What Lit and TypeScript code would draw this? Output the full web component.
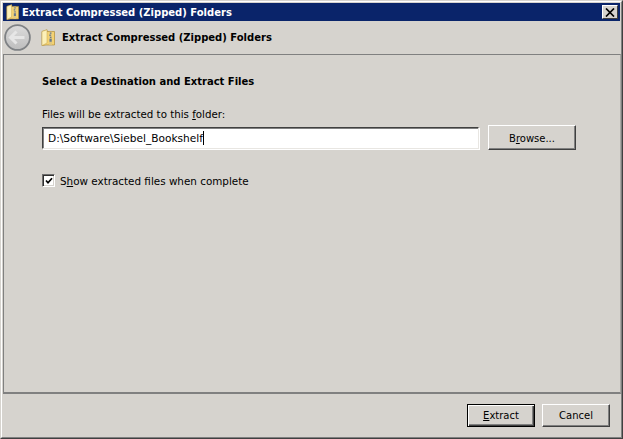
import { LitElement, html, css } from "lit";
import { customElement } from "lit/decorators.js";

const folder = (w: number, h: number) => html`<svg viewBox="0 0 14 17" width=${w} height=${h}>
  <path d="M1 2.5 L6 .8 L6 2.5 L13.5 2.5 L13.5 16 L5 16 L1 16.6 Z" fill="#f4d272" stroke="#b08e3a" stroke-width=".7"/>
  <path d="M1 2.5 L6 .8 L6 14 L1 16.6 Z" fill="#fcf0b8" stroke="#c4a450" stroke-width=".5"/>
  <path d="M8 2.8 h3 v13 h-3z" fill="#e0c880"/>
  <path d="M9 3.5h1.4v1.3h-1.4zM8.4 5.6h1.4v1.3h-1.4zM9 7.7h1.4v1.3h-1.4zM8.5 9.8h2.2v3h-2.2z" fill="#68788a"/>
</svg>`;

@customElement("app-root")
export class AppRoot extends LitElement {
  static styles = css`
    :host { display: block; width: 623px; height: 439px; overflow: hidden; font-family: "DejaVu Sans", sans-serif; font-size: 10px; color: #000; }
    * { box-sizing: border-box; }
    .win { width: 623px; height: 439px; display: flex; flex-direction: column; background: #d6d3ce;
      border-top: 1px solid #d6d3ce; border-left: 1px solid #d6d3ce; border-right: 1px solid #404040; border-bottom: 1px solid #404040; }
    .inner { flex: 1; display: flex; flex-direction: column; border-top: 1px solid #fff; border-left: 1px solid #fff; border-right: 1px solid #808080; border-bottom: 1px solid #808080; padding: 1px 1px 2px 1px; min-height: 0; }
    .title { height: 18px; flex: none; background: #0a246a; display: flex; align-items: center; padding: 0 2px 0 0; color: #fff; font-weight: 700; font-size: 10px; }
    .title .ic { width: 19px; display: flex; justify-content: center; }
    .title .txt { flex: 1; white-space: nowrap; }
    .close { width: 16px; height: 14px; background: #d6d3ce; border: 1px solid; border-color: #fff #404040 #404040 #fff; display: flex; align-items: center; justify-content: center; }
    .head { height: 33px; flex: none; display: flex; align-items: center; }
    .back { width: 27px; height: 27px; margin-left: 1px; }
    .head .ic { margin-left: 10px; width: 14px; height: 17px; display: flex; }
    .head .h { margin-left: 7px; font-weight: 700; font-size: 10px; white-space: nowrap; }
    .panel { height: 340px; flex: none; margin-right: -1px; border: 1px solid #808080; border-bottom-width: 2px; border-right-color: #a8a8a4; padding: 20px 0 0 38px; }
    .panel h1 { margin: 0; font-size: 10px; font-weight: 700; line-height: 13px; }
    .lab { margin-top: 20px; line-height: 13px; font-size: 10.28px; white-space: nowrap; }
    .row { display: flex; margin-top: 6px; align-items: flex-start; }
    .input { width: 437px; height: 22px; background: #fff; border: 1px solid; border-color: #404040 #e8e6e2 #e8e6e2 #404040; display: flex; align-items: center; padding-left: 5px; box-shadow: inset 1px 1px 0 #808080, 1px 1px 0 #fff; white-space: nowrap; font-size: 10.6px; }
    .caret { width: 1px; height: 14px; background: #000; }
    .btn { width: 88px; height: 25px; background: #d6d3ce; border: 1px solid; border-color: #fff #404040 #404040 #fff; box-shadow: inset -1px -1px 0 #808080; display: flex; align-items: center; justify-content: center; font-size: 10px; }
    .row .btn { margin-left: 9px; margin-top: -2px; padding-top: 2px; }
    u { text-underline-offset: 1px; }
    .chk { display: flex; align-items: center; margin-top: 24px; font-size: 10.38px; }
    .box { width: 13px; height: 13px; background: #fff; border: 1px solid; border-color: #6e6e6e #fff #fff #6e6e6e; box-shadow: inset 1px 1px 0 #303030, inset -1px -1px 0 #d6d3ce; display: flex; align-items: center; justify-content: center; margin-right: 5px; }
    .foot { flex: 1; display: flex; justify-content: flex-end; align-items: flex-start; gap: 7px; padding: 10px 10px 0 0; }
    .foot .btn { width: 68px; height: 23px; }
    .foot .def { border: 1px solid #000; box-shadow: inset 1px 1px 0 #fff, inset -1px -1px 0 #404040, inset -2px -2px 0 #808080; }
  `;

  render() {
    return html`<div class="win"><div class="inner">
      <div class="title">
        <span class="ic">${folder(13, 16)}</span>
        <span class="txt">Extract Compressed (Zipped) Folders</span>
        <span class="close"><svg width="10" height="9" viewBox="0 0 10 9"><path d="M1 .5 L9 8.5 M9 .5 L1 8.5" stroke="#000" stroke-width="1.7"/></svg></span>
      </div>
      <div class="head">
        <svg class="back" viewBox="0 0 27 27">
          <defs><linearGradient id="g" x1="0" y1="0" x2="0" y2="1"><stop offset="0" stop-color="#dcdcdc"/><stop offset="1" stop-color="#bdbdbd"/></linearGradient></defs>
          <circle cx="13.5" cy="13.5" r="12.4" fill="url(#g)" stroke="#7f8285" stroke-width="1.8"/>
          <path d="M12.5 7.5 L6.5 13.5 L12.5 19.5 M7 13.5 H20.5" fill="none" stroke="#e6e6e6" stroke-width="3"/>
        </svg>
        <span class="ic">${folder(14, 17)}</span>
        <span class="h">Extract Compressed (Zipped) Folders</span>
      </div>
      <div class="panel">
        <h1>Select a Destination and Extract Files</h1>
        <div class="lab">Files will be extracted to this <u>f</u>older:</div>
        <div class="row">
          <div class="input">D:\\Software\\Siebel_Bookshelf<span class="caret"></span></div>
          <div class="btn"><span>B<u>r</u>owse...</span></div>
        </div>
        <div class="chk">
          <span class="box"><svg width="8" height="8" viewBox="0 0 8 8"><path d="M1 3.5 L3 5.7 L7 1.2" fill="none" stroke="#000" stroke-width="1.7"/></svg></span>
          <span>S<u>h</u>ow extracted files when complete</span>
        </div>
      </div>
      <div class="foot">
        <div class="btn def"><span><u>E</u>xtract</span></div>
        <div class="btn"><span>Cancel</span></div>
      </div>
    </div></div>`;
  }
}
